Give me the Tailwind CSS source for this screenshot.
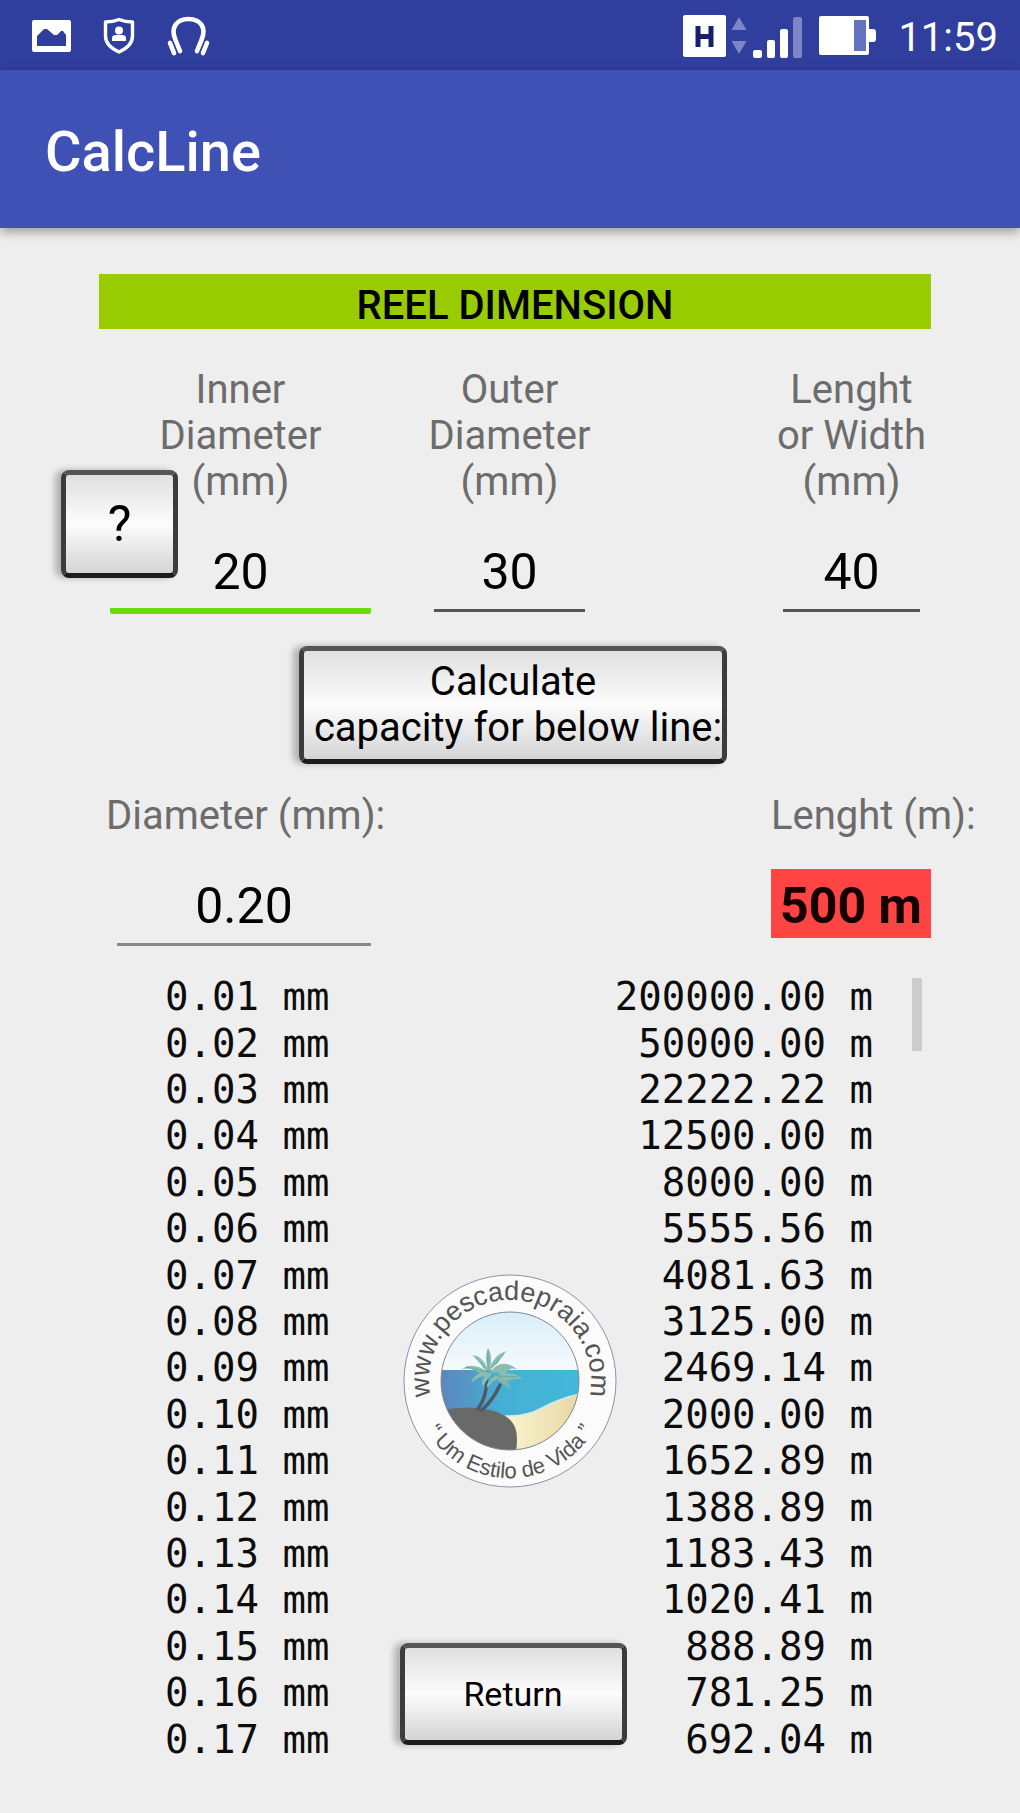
<!DOCTYPE html>
<html lang="en">
<head>
<meta charset="utf-8">
<meta name="viewport" content="width=device-width, initial-scale=1">
<title>CalcLine</title>
<script src="https://cdn.jsdelivr.net/npm/@tailwindcss/browser@4"></script>
</head>
<body class="min-h-screen bg-[#eeeeee] font-[Roboto,sans-serif] text-[40px] leading-[46px] text-black">

<!-- Status bar -->
<div class="flex h-[70px] items-center justify-between bg-[#303e9e] pt-0.5 pr-[22px] pl-8 text-white">
  <div class="flex items-center gap-8">
    <svg class="h-8 w-[39px]" viewBox="0 0 39 32" aria-label="Picture"><path fill="#fff" fill-rule="evenodd" d="M2 0H37Q39 0 39 2V30Q39 32 37 32H2Q0 32 0 30V2Q0 0 2 0ZM5 26H34V15L31 11H29L25 15H22L15 9H12L5 16Z"/></svg>
    <svg class="h-[38px] w-8" viewBox="0 0 32 38" aria-label="Protection"><path fill="none" stroke="#fff" stroke-width="3.4" stroke-linejoin="round" d="M16 2.500Q22 5 29.500 5V19Q29.500 29 16 35Q2.500 29 2.500 19V5Q10 5 16 2.500Z"/><circle cx="16" cy="13.500" r="4" fill="#fff"/><path fill="#fff" d="M9 24V21Q9 18 13 18H19Q23 18 23 21V24Z"/></svg>
    <svg class="h-10 w-11" viewBox="0 0 44 40" aria-label="Headphones"><g fill="none" stroke="#fff" stroke-width="4.600" stroke-linecap="round"><path d="M13 35L8.500 24C3 11 10 3 21.500 3S40 11 34.500 24L30 35"/><path d="M3 27L7 37M40 27L36 37"/></g></svg>
  </div>
  <div class="flex items-center">
    <svg class="mr-[5px] h-[42px] w-[43px]" viewBox="0 0 43 42" aria-label="H network"><rect width="43" height="42" rx="2" fill="#fff"/><path fill="none" stroke="#17206a" stroke-width="5" d="M15 11V32M28 11V32M15 21.500H28"/></svg>
    <svg class="mr-1.5 h-[38px] w-4" viewBox="0 0 16 38" aria-label="Data activity"><path fill="#7c86c9" d="M8 0L15.500 13H.5ZM8 37L.5 24H15.500Z"/></svg>
    <svg class="mr-4 h-[46px] w-[50px]" viewBox="0 -4 50 46" aria-label="Signal"><g fill="#fff"><rect y="33" width="9" height="8" rx="2"/><rect x="14" y="23" width="8" height="18" rx="2"/><rect x="27" y="12" width="8" height="29" rx="2"/></g><rect x="40" width="9" height="41" rx="2" fill="#7c86c9"/></svg>
    <svg class="mr-[22px] h-10 w-[57px]" viewBox="0 0 57 40" aria-label="Battery"><path fill="#fff" d="M2 0H48Q50 0 50 2V13H54Q57 13 57 16V23Q57 26 54 26H50V37Q50 39 48 39H2Q0 39 0 37V2Q0 0 2 0Z"/><rect x="35" y="4" width="12" height="31" fill="#6672bf"/></svg>
    <time class="pt-1">11:59</time>
  </div>
</div>

<!-- App bar -->
<header class="relative flex h-[158px] items-center bg-[#3f51b5] pt-1.5 pl-[45px] shadow-[0_4px_10px_rgba(0,0,0,0.35)]">
  <h1 class="text-[56px] leading-[64px] font-medium text-white">CalcLine</h1>
</header>

<main class="relative pt-[46px] pr-[89px] pb-[52px] pl-[99px]">
  <h2 class="h-[55px] bg-[#99cc00] pt-1 text-center leading-[55px] font-medium">REEL DIMENSION</h2>

  <section class="relative mt-[38px] flex items-start pr-[11px] pl-[11px] text-center">
    <div class="w-[261px]">
      <label for="inner" class="flex flex-col items-center whitespace-nowrap text-[#6c6c6c]"><span>Inner</span><span>Diameter</span><span>(mm)</span></label>
      <input id="inner" value="20" inputmode="decimal" class="mt-[30px] block h-[79px] w-full rounded-[2px] border-b-[6px] border-[#66dd0c] bg-transparent text-center text-[50px] outline-none">
    </div>
    <div class="ml-[63px] w-[151px]">
      <label for="outer" class="flex flex-col items-center whitespace-nowrap text-[#6c6c6c]"><span>Outer</span><span>Diameter</span><span>(mm)</span></label>
      <input id="outer" value="30" inputmode="decimal" class="mt-[30px] block h-[77px] w-full border-b-[3px] border-[#555] bg-transparent text-center text-[50px] outline-none">
    </div>
    <div class="ml-auto w-[137px]">
      <label for="width" class="flex flex-col items-center whitespace-nowrap text-[#6c6c6c]"><span>Lenght</span><span>or Width</span><span>(mm)</span></label>
      <input id="width" value="40" inputmode="decimal" class="mt-[30px] block h-[77px] w-full border-b-[3px] border-[#555] bg-transparent text-center text-[50px] outline-none">
    </div>
    <button class="absolute top-[103px] -left-[38px] h-[108px] w-[117px] rounded-lg border-[5px] border-t-[#555] border-r-[#3c3c3c] border-b-[#1c1c1c] border-l-[#3c3c3c] bg-linear-to-b from-[#e0e0e0] via-[#fcfcfc] to-[#d4d4d4] text-[50px] shadow-[-6px_0_6px_rgba(0,0,0,0.25)]">?</button>
  </section>

  <div class="mt-8 flex justify-center pr-1">
    <button class="h-[118px] w-[428px] rounded-lg border-[5px] border-t-[#555] border-r-[#3c3c3c] border-b-[#1c1c1c] border-l-[#3c3c3c] bg-linear-to-b from-[#e0e0e0] via-[#fcfcfc] to-[#d4d4d4] whitespace-nowrap shadow-[-6px_0_6px_rgba(0,0,0,0.25)]">Calculate<br>&nbsp;capacity for below line:</button>
  </div>

  <section class="mt-[29px] flex items-start justify-between pl-[7px]">
    <div>
      <label for="line" class="block text-[#6c6c6c]">Diameter (mm):</label>
      <input id="line" value="0.20" inputmode="decimal" class="mt-[30px] ml-[11px] block h-[77px] w-[254px] border-b-[3px] border-[#888] bg-transparent text-center text-[50px] outline-none">
    </div>
    <div class="w-40">
      <label for="result" class="block whitespace-nowrap text-[#6c6c6c]">Lenght (m):</label>
      <output id="result" class="mt-[30px] block h-[69px] bg-[#ff4444] pt-1 text-center text-[50px] leading-[67px] font-bold text-[#140000]">500 m</output>
    </div>
  </section>

  <section class="relative mt-7">
    <table class="h-[789px] w-full font-['DejaVu_Sans_Mono',monospace] text-[39px] leading-[46px] text-[#0c0c0c]">
      <tbody class="[&_td]:p-0 [&_td:first-child]:pl-[66px] [&_td:last-child]:pr-[58px] [&_td:last-child]:text-right">
        <tr><td>0.01 mm</td><td>200000.00 m</td></tr>
        <tr><td>0.02 mm</td><td>50000.00 m</td></tr>
        <tr><td>0.03 mm</td><td>22222.22 m</td></tr>
        <tr><td>0.04 mm</td><td>12500.00 m</td></tr>
        <tr><td>0.05 mm</td><td>8000.00 m</td></tr>
        <tr><td>0.06 mm</td><td>5555.56 m</td></tr>
        <tr><td>0.07 mm</td><td>4081.63 m</td></tr>
        <tr><td>0.08 mm</td><td>3125.00 m</td></tr>
        <tr><td>0.09 mm</td><td>2469.14 m</td></tr>
        <tr><td>0.10 mm</td><td>2000.00 m</td></tr>
        <tr><td>0.11 mm</td><td>1652.89 m</td></tr>
        <tr><td>0.12 mm</td><td>1388.89 m</td></tr>
        <tr><td>0.13 mm</td><td>1183.43 m</td></tr>
        <tr><td>0.14 mm</td><td>1020.41 m</td></tr>
        <tr><td>0.15 mm</td><td>888.89 m</td></tr>
        <tr><td>0.16 mm</td><td>781.25 m</td></tr>
        <tr><td>0.17 mm</td><td>692.04 m</td></tr>
      </tbody>
    </table>
    <div class="absolute top-1 right-[9px] h-[73px] w-2.5 bg-[#cccccc]"></div>
    <div class="absolute inset-x-0 bottom-[18px] flex justify-center pr-1">
      <button class="h-[102px] w-[227px] rounded-lg border-[5px] border-t-[#555] border-r-[#3c3c3c] border-b-[#1c1c1c] border-l-[#3c3c3c] bg-linear-to-b from-[#e0e0e0] via-[#fcfcfc] to-[#d4d4d4] text-[34px] shadow-[-6px_0_6px_rgba(0,0,0,0.25)]">Return</button>
    </div>
  </section>

  <!-- Sponsor badge, centred between the two columns -->
  <a href="#" class="absolute bottom-[326px] left-1/2 -translate-x-1/2" aria-label="www.pescadepraia.com">
    <svg class="block size-[216px]" viewBox="-108 -108 216 216">
      <defs>
        <clipPath id="disc"><circle r="69"/></clipPath>
        <linearGradient id="sky" x1="0" y1="0" x2="0" y2="1"><stop offset="0" stop-color="#d8eefa"/><stop offset="1" stop-color="#f7fafc"/></linearGradient>
        <linearGradient id="sea" x1="0" y1="0" x2="1" y2="0"><stop offset="0" stop-color="#5c86bd"/><stop offset=".45" stop-color="#46afd4"/><stop offset="1" stop-color="#42b9da"/></linearGradient>
        <linearGradient id="sand" x1="0" y1="0" x2="1" y2="0"><stop offset="0" stop-color="#fbf4cf"/><stop offset="1" stop-color="#e8d7a4"/></linearGradient>
        <path id="over" d="M-77 25A81 81 0 1 1 77 25"/>
        <path id="under" d="M-88 41A97 97 0 0 0 88 41"/>
      </defs>
      <circle r="106" fill="#fbfbfb" stroke="#8f8fa8" stroke-width="1"/>
      <g clip-path="url(#disc)">
        <rect x="-70" y="-70" width="140" height="60" fill="url(#sky)"/>
        <rect x="-70" y="-11" width="140" height="82" fill="url(#sea)"/>
        <path fill="url(#sand)" d="M-5 35Q16 36 32 27Q50 17 70 13V70H-5Z"/>
        <path fill="none" stroke="#cdeef2" stroke-width="1.500" d="M-5 35Q16 36 32 27Q50 17 70 13"/>
        <path fill="#696969" d="M-70 30C-45 24-20 26-5 35C8 43 8 55 6 72H-70Z"/>
        <path fill="none" stroke="#4b5a66" stroke-width="3.500" stroke-linecap="round" d="M-23 0Q-24 17-32 28M-10 4Q-17 19-28 29"/>
        <g fill="#88bdb0">
          <path d="M-22-9Q-38-20-48-12Q-39-14-32-9Q-27-5-22-9ZM-22-11Q-27-25-38-26Q-29-20-27-13ZM-22-11Q-26-25-22-33Q-17-25-20-12ZM-21-11Q-16-27-3-30Q-8-26-12-18ZM-20-9Q-9-24 7-12Q-4-14-10-8Z"/>
          <path d="M-22-9Q-36-9-39 2Q-31-5-24-5ZM-20-9Q-31-2-27 5Q-21-4-18-7ZM-14-6Q-24 0-23 7Q-17-1-10-3ZM-12-5Q2-11 13-2Q4-3-2 0ZM-11-5Q0-1 0 8Q-6 3-12-1ZM-12-6Q-6-16 4-14Q-3-11-7-4Z"/>
        </g>
        <path fill="none" stroke="#6ea79f" stroke-width="1" d="M-22-9L-35-24M-22-9L-22-30M-22-9L-6-27M-22-9L-44-14M-12-5L8-4M-12-5L-1 5"/>
      </g>
      <circle r="69" fill="none" stroke="#83888c" stroke-width="1"/>
      <text class="font-['Liberation_Sans',sans-serif] text-[27px]" fill="#555" text-anchor="middle"><textPath href="#over" startOffset="50%">www.pescadepraia.com</textPath></text>
      <text class="font-['Liberation_Sans',sans-serif] text-[22px]" fill="#555" text-anchor="middle"><textPath href="#under" startOffset="50%">“ Um Estilo de Vida ”</textPath></text>
    </svg>
  </a>
</main>
</body>
</html>
